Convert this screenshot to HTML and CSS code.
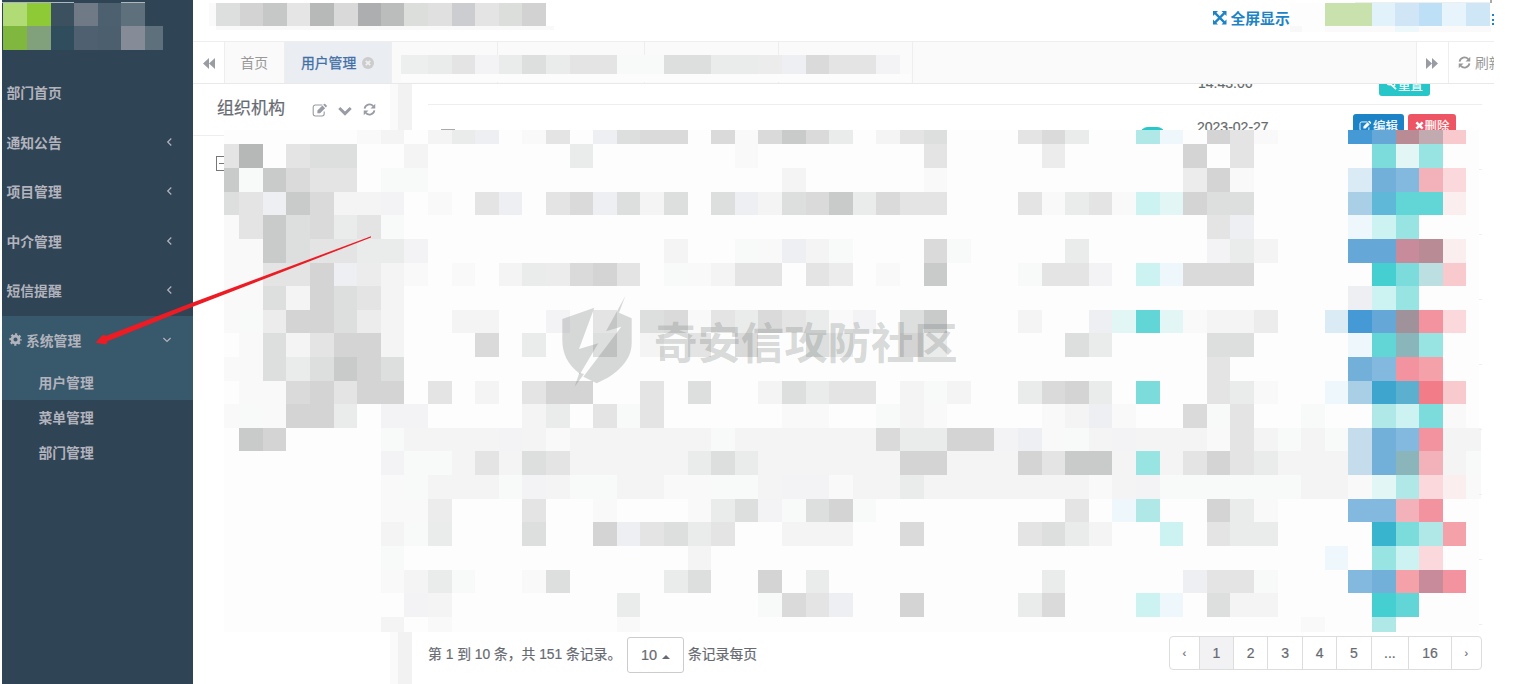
FILE: index.html
```html
<!DOCTYPE html>
<html lang="zh-CN">
<head>
<meta charset="utf-8">
<title>用户管理</title>
<link rel="stylesheet" href="styles.css">
</head>
<body>
<svg class="defs" width="0" height="0">
  <symbol id="left" viewBox="0 0 8 12"><path d="M6.3 2.5 2.7 6l3.6 3.5" fill="none" stroke="currentColor" stroke-width="1.2"/></symbol>
  <symbol id="down" viewBox="0 0 10 8"><path d="M1.4 2 5 5.5l3.6-3.5" fill="none" stroke="currentColor" stroke-width="1.2"/></symbol>
  <symbol id="refresh" viewBox="0 0 14 14"><path d="M1.7 6A5.3 5.3 0 0 1 11 3.4M12.3 8A5.3 5.3 0 0 1 3 10.6" fill="none" stroke="currentColor" stroke-width="1.9"/><path d="M13.2.8v5.1H8.1zM.8 13.2V8.1h5.1z" fill="currentColor"/></symbol>
  <symbol id="edit" viewBox="0 0 16 14"><path d="M10.3 2H3.4A2.2 2.2 0 0 0 1.2 4.2v6.6A2.2 2.2 0 0 0 3.4 13H10a2.2 2.2 0 0 0 2.2-2.2V8.6" fill="none" stroke="currentColor" stroke-width="1.1"/><path d="M5.4 10.2V7.5l5-5 2.7 2.7-5 5zM11.2 1.7l.8-.8q.6-.5 1.2 0l1.5 1.5q.5.6 0 1.2l-.8.8z" fill="currentColor"/></symbol>
</svg>
<div class="app">
  <nav class="sidebar">
    <ul class="menu">
      <li class="item">部门首页</li>
      <li class="item">通知公告<svg class="angle"><use href="#left"/></svg></li>
      <li class="item">项目管理<svg class="angle"><use href="#left"/></svg></li>
      <li class="item">中介管理<svg class="angle"><use href="#left"/></svg></li>
      <li class="item">短信提醒<svg class="angle"><use href="#left"/></svg></li>
      <li class="group">
        <div class="item open"><svg class="gear" viewBox="0 0 14 14"><circle cx="7" cy="7" r="5.5" fill="none" stroke="currentColor" stroke-width="2.4" stroke-dasharray="2.3 2.02" stroke-dashoffset="1.15"/><circle cx="7" cy="7" r="3.7" fill="none" stroke="currentColor" stroke-width="3"/></svg>系统管理<svg class="angle wide"><use href="#down"/></svg></div>
        <div class="sub open">用户管理</div>
        <div class="sub">菜单管理</div>
        <div class="sub">部门管理</div>
      </li>
    </ul>
  </nav>
  <main class="main">
    <header class="topbar">
      <a class="full"><svg class="i-full" viewBox="0 0 14 14"><path d="M2 2l10 10M12 2 2 12" stroke="currentColor" stroke-width="2.4"/><path d="M0 0h5.2L0 5.2zM14 0v5.2L8.8 0zM0 14V8.8L5.2 14zM14 14H8.8L14 8.8z" fill="currentColor"/></svg>全屏显示</a>
    </header>
    <div class="tabs">
      <div class="roll"><svg class="i-roll" viewBox="0 0 12 11"><path d="M6 0v11L0 5.5zM12 0v11L6 5.5z" fill="currentColor"/></svg></div>
      <div class="tab home">首页</div>
      <div class="tab active">用户管理<svg class="close" viewBox="0 0 12 12"><circle cx="6" cy="6" r="6" fill="#ccc"/><path d="M3.8 3.8l4.4 4.4M8.2 3.8 3.8 8.2" stroke="#eef0f2" stroke-width="1.7"/></svg></div>
      <div class="tab t1"></div><div class="tab t2"></div><div class="tab t3"></div><div class="tab t4"></div>
      <div class="fill"></div>
      <div class="roll right"><svg class="i-roll" viewBox="0 0 12 11"><path d="M0 0v11l6-5.5zM6 0v11l6-5.5z" fill="currentColor"/></svg></div>
      <div class="reload"><svg class="i-ref"><use href="#refresh"/></svg>刷新</div>
    </div>
    <div class="content">
      <aside class="tree">
        <div class="tree-head">组织机构
          <svg class="i-edit"><use href="#edit"/></svg>
          <svg class="i-down" viewBox="0 0 14 10"><path d="M1.3 2 7 7.6 12.7 2" fill="none" stroke="currentColor" stroke-width="2.9"/></svg>
          <svg class="i-ref"><use href="#refresh"/></svg>
        </div>
        <div class="node"></div>
      </aside>
      <div class="splitter"></div>
      <section class="list">
        <div class="row prev"><span class="time">14:43:06</span><span class="btn reset"><svg class="i-btn" viewBox="0 0 12 12"><circle cx="3.5" cy="4" r="2.2" fill="none" stroke="currentColor" stroke-width="1.8"/><path d="M5 5.5l6 5.5M8 8l2-2" stroke="currentColor" stroke-width="1.8"/></svg>重置</span></div>
        <div class="row next"><span class="check"></span><span class="toggle"></span><span class="time">2023-02-27</span><span class="btn modify"><svg class="i-btn wide"><use href="#edit"/></svg>编辑</span><span class="btn remove"><svg class="i-btn x" viewBox="0 0 10 10"><path d="M1.5 1.5l7 7M8.5 1.5l-7 7" stroke="currentColor" stroke-width="2.8"/></svg>删除</span></div>
        <footer class="foot">
          <span class="info">第 1 到 10 条，共 151 条记录。</span>
          <span class="size">10<i class="caret"></i></span>
          <span class="per">条记录每页</span>
          <div class="pages"><b class="p0">‹</b><b class="on">1</b><b>2</b><b>3</b><b>4</b><b>5</b><b class="p3">...</b><b class="p6">16</b><b class="p1">›</b></div>
        </footer>
      </section>
    </div>
  </main>
  <svg class="overlay" id="mosaic" viewBox="0 0 1524 684"></svg>
  <svg class="overlay" viewBox="0 0 1524 684">
    <g transform="translate(380 230) scale(.33333)" fill="#6e7373" fill-opacity=".27">
      <path d="M547 267 643 233 597 357 655 340 600 432C562 403 547 370 547 330Z"/>
      <path d="M584 470 598 428 612 432Z"/>
      <path d="M736 198 678 304 724 290 610 440 650 460C710 435 755 392 755 340V265L717 248Z"/>
    </g>
    <path d="M371 236.3 192 302.8 106.5 335.8 102.5 335 95.5 342.8 106.5 344.6 107 341.6 193.5 306.6 371 237.4Z" fill="#ed1c24"/>
  </svg>
  <div class="watermark">奇安信攻防社区</div>
</div>
<script src="mosaic.js"></script>
</body>
</html>
```

FILE: styles.css
```css
* { box-sizing: border-box; }
body { margin: 0; background: #fff; font-family: "Liberation Sans", "Noto Sans CJK SC", sans-serif; font-size: 13.8px; color: #676a6c; }
.defs { position: absolute; }
.app { position: relative; display: flex; width: 1524px; height: 684px; padding-left: 2px; overflow: hidden; }
.sidebar { width: 191px; flex: none; background: #2f4454; padding-top: 68.4px; color: #b3b3bd; font-weight: 600; }
.menu { list-style: none; margin: 0; padding: 0; }
.item { height: 49.5px; display: flex; align-items: center; padding: 0 20px 2px 4.5px; }
.item.open { padding-left: 7px; }
.open { background: #38586b; }
.angle { width: 8px; height: 12px; margin-left: auto; }
.angle.wide { width: 10px; height: 8px; margin-right: 1px; }
.gear { width: 13px; height: 13px; margin-right: 4px; }
.sub { height: 35px; line-height: 38px; padding-left: 36.5px; }
.main { width: 1301px; flex: none; display: flex; flex-direction: column; overflow: hidden; }
.topbar { height: 41px; flex: none; }
.full { display: flex; align-items: center; gap: 4px; margin-left: 1020px; height: 35.5px; font-size: 14.8px; font-weight: 600; color: #1c84c6; }
.i-full { width: 13.5px; height: 13.5px; }
.tabs { height: 43px; flex: none; display: flex; border-top: 1px solid #eee; border-bottom: 1px solid #e8e9e9; background: #fafafa; color: #999; overflow: hidden; }
.roll { width: 32px; flex: none; background: #fff; border-right: 1px solid #eee; display: flex; align-items: center; justify-content: center; color: #999ca3; padding-top: 2px; }
.roll.right { border-left: 1px solid #eee; width: 33px; padding-right: 2px; }
.i-roll { width: 12px; height: 11px; }
.tab { flex: none; display: flex; align-items: center; border-right: 1px solid #eee; padding-bottom: 1.5px; }
.home { width: 60px; padding-left: 15.5px; }
.active { width: 107px; padding-left: 16px; background: #eaedf1; color: #4270a8; -webkit-text-stroke: .3px #4270a8; }
.close { width: 12px; height: 12px; margin: 2px 0 0 6px; }
.t1 { width: 106px; } .t2 { width: 147px; } .t3 { width: 134px; } .t4 { width: 134px; }
.fill { flex: 1; }
.reload { width: 45px; flex: none; background: #fff; display: flex; align-items: center; padding: 0 0 1.5px 9px; gap: 4px; white-space: nowrap; }
.reload .i-ref { margin-top: 2px; }
.i-ref { width: 13px; height: 13px; flex: none; }
.content { flex: 1; display: flex; min-height: 0; }
.tree { width: 197px; flex: none; }
.tree-head { height: 52px; border-bottom: 1px solid #eee; display: flex; align-items: center; padding: 0 0 6px 24px; font-size: 17px; color: #676a72; -webkit-text-stroke: .2px #676a72; }
.tree-head svg { color: #999ca6; margin-top: 6px; }
.i-edit { width: 16px; height: 14px; margin-left: 27px; }
.tree-head .i-down { width: 14px; height: 10px; margin: 8px 11px 0 10px; }
.node { width: 15px; height: 15px; margin: 20px 0 0 23px; border: 1.5px solid #777; background: linear-gradient(#777, #777) center / 9px 1px no-repeat; }
.splitter { width: 21.5px; flex: none; background: linear-gradient(90deg, #fafafa 8px, #f2f2f2 8px); }
.list { flex: 1; padding: 0 12px 0 16.5px; display: flex; flex-direction: column; overflow: hidden; }
.row { display: flex; }
.prev { height: 21px; flex: none; border-bottom: 1px solid #eee; align-items: flex-start; }
.time { font-size: 14px; line-height: 16px; -webkit-text-stroke: .2px #676a6c; }
.prev .time { margin: -9px 0 0 770px; width: 54px; }
.btn { display: flex; align-items: center; justify-content: center; height: 22px; border-radius: 3px; color: #fff; font-size: 12.4px; gap: 1px; -webkit-text-stroke: .2px #fff; }
.i-btn { width: 11px; height: 11px; }
.i-btn.wide { width: 13px; height: 12px; }
.i-btn.x { width: 9px; height: 9px; }
.reset { width: 51px; background: #26c6c9; margin: -10.5px 0 0 127px; }
.next { height: 527px; align-items: flex-start; flex: none; }
.check { width: 14px; height: 14px; border: 1px solid #aaa; margin: 24px 0 0 12.5px; }
.toggle { width: 27px; height: 18px; border-radius: 9px; border: 1px solid #26c6c9; background: #26c6c9; margin: 22px 0 0 684.5px; }
.next .time { margin: 14px 0 0 31px; width: 156px; }
.modify { width: 51px; background: #1c84c6; margin-top: 8.5px; padding-top: 2px; }
.remove { width: 48px; background: #ed5565; margin: 8.5px 0 0 4px; padding-top: 2px; }
.foot { display: flex; align-items: flex-start; height: 48px; color: #676a72; -webkit-text-stroke: .2px #676a72; }
.info { width: 199px; margin-top: 12.6px; line-height: 20px; white-space: nowrap; }
.size { width: 57px; height: 36px; margin-top: 5px; border: 1px solid #ccc; border-radius: 3px; display: flex; align-items: center; justify-content: center; gap: 5px; font-size: 14.5px; }
.caret { border: 4px solid transparent; border-top: 0; border-bottom-color: #676a72; margin-top: 3px; }
.per { margin: 12.6px 0 0 4px; line-height: 20px; }
.pages { display: flex; margin: 3.5px 0 0 auto; height: 34.5px; border: 1px solid #ddd; border-radius: 4px; }
.pages b { width: 34.4px; display: flex; align-items: center; justify-content: center; border-left: 1px solid #ddd; font-weight: 400; font-size: 14px; }
.pages .p0 { width: 28.6px; border: 0; font-size: 11px; }
.pages .on { background: #f2f2f4; }
.pages .p3 { width: 37.6px; } .pages .p6 { width: 42.6px; } .pages .p1 { width: 30.2px; font-size: 11px; }
.overlay { position: absolute; left: 0; top: 0; width: 1524px; height: 684px; }
.watermark { position: absolute; left: 654px; top: 313px; line-height: 62px; font-size: 43.4px; font-weight: 700; color: rgba(110, 115, 115, .27); white-space: nowrap; }
```

FILE: mosaic.js
```javascript
// Pixelated areas: each row lists runs as <first column><one colour key per cell>.
const colors = {
  _: '#fdfdfd', a: '#f9f9f9', b: '#f4f4f4', c: '#ececec', d: '#e4e4e4', e: '#dadada', f: '#d4d4d4', g: '#c9cbcb', h: '#b6b8b7',
  i: '#eeeff2', j: '#eaeceb', k: '#dcdfdd', l: '#f8faf9', y: '#f3f3f6',
  T: '#45cfd0', U: '#62d6d6', V: '#7cdcdc', W: '#97e4e3', X: '#b0e8e8', Y: '#ccf2f1', Z: '#e2f6f6',
  B: '#4599d4', C: '#65a8d8', D: '#72b0da', E: '#84b9df', F: '#a8cfe6', G: '#c4dceb', H: '#dbebf5', I: '#eef8fc',
  p: '#f27c88', P: '#f3939f', Q: '#f4a1aa', R: '#f3b1ba', S: '#f8cace', t: '#fad8dc', u: '#fbeeee',
  m: '#b98c95', n: '#c88b9b', o: '#9f929a', q: '#8ab5bb', r: '#3ea6ce', s: '#5cb0cf', v: '#39b4ce', w: '#60b8d8', x: '#c1abb1', z: '#bce0e1'
};
const rows = [
  '6ab 9bji 13ad 16ikee 21eaegej 28bdk 34dej 39XI 42fda 48BCmxS',
  '0dh_dkk 8b 15j 22a 30d 35c 41f_d 49VZW',
  '0glgedd_ll 24b 30a 41cfa 48HDERt',
  '0kdigebby_a 11di 14deikbk 21kibkegjedd 34dajda 39YZfkk 48FwUUu',
  '0adgkejdl 42di 48IYW_',
  '0aagkddjjy 19b 22laibl 30el 36j 42yjb 48CCnmu',
  '0aaddficba 10a_bjcefd 19labdd_dc_a_g 34lddy 39YIeee 49TVzS',
  '0aakbfkdb 48iYW',
  '0alcffkcb 10bb 14y 16d 18keadjedjay_kg 34b 37iZUZabbc 47HBCoPt',
  '0_akbdffb 11e 13j 16k_b_d_e 25kj 29fj 36kj 42kk 48IUqW',
  '0aakjkgfk 42d 48DEPQ',
  '0_aaefdff_d_b_dff 18d_k 23bkjdd_blb 34jefj 39V 42dja 47IFrspS',
  '0alaffj_yy 13bj_dld 24aa 28lba 35abia 41eld 46l 49XYVa',
  '1gf 7lbbbbybab 16bbbbblbbbbbb 28ejjffyi 35albybbba 43d 44blblGDEPbb',
  '7yllbdbkd 15bbbbb 20jkj 23bbbbbb 29ffbbb 34fdgg 38bWbdfdj 45bbb 48GDqRbl',
  '7albb 11blyb 15llbb 19aallb 24yyabbj 30bbbbbbbaa 37abyll 42llllbb 48aZXtua',
  '7aac 13d 16a 20ajkylkfl 36d_IX 42fja 48EERP',
  '7blj 13k 16fidkjd 24bbb 29e 34dkjb 40Y 42djj 49vVXQ',
  '7l 20b 47I 49WYt',
  '7abjl 13ak 19jk 23f_j 35j 41iddl 48EDQnP',
  '8yb 17j 23ledi 29f 34je 39YI 42kbb 49TU',
  '7b_a 17a 46a 49X'
];

const svg = document.getElementById('mosaic');
const box = (x, y, w, h, fill) => {
  const r = document.createElementNS('http://www.w3.org/2000/svg', 'rect');
  const set = { x, y, width: w, height: h, fill, 'shape-rendering': 'crispEdges' };
  for (const k in set) r.setAttribute(k, set[k]);
  svg.appendChild(r);
};
const edge = (c) => Math.round(215.5 + 23.6 * c);
box(224, 130, 1255, 502, '#fdfdfd');
rows.forEach((row, n) => {
  const y = n ? Math.round(144.4 + 23.62 * (n - 1)) : 130;
  const end = Math.min(632, Math.round(144.4 + 23.62 * n));
  row.split(' ').forEach((run) => {
    const m = run.match(/^(\d+)(.*)$/);
    [...m[2]].forEach((key, k) => {
      const c = Number(m[1]) + k;
      const x = Math.max(224, edge(c));
      const right = Math.min(edge(c + 1), 1481);
      if (key !== '_') box(x, y, right - x, end - y, colors[key]);
    });
  });
});
for (let y = 169; y < 632; y += 65) box(1479, y, 3, 1, '#eee');

const strip = (x, y, h, list) => list.forEach(([w, fill]) => { if (fill) box(x, y, w, h, fill); x += w; });
// Logo
strip(2, 2, 1, [[72, '#aeb7bd'], [47, null], [24, '#aeb7bd']]);
strip(3, 3, 23, [[24, '#b1dc75'], [24, '#8eca36'], [23, '#3b5160'], [24, '#6f7a86'], [23, '#4d606f'], [24, '#5f707d']]);
strip(3, 26, 24, [[24, '#80b83f'], [24, '#81a07c'], [23, '#2f4d5c'], [24, '#4f6070'], [23, '#4b5f6e'], [24, '#868c97'], [18, '#5f707d']]);
// Page heading
strip(209, 3, 23, [[7, '#fafafa'], [24, '#dddfde'], [23, '#d3d3d3'], [24, '#c6c8c7'], [23, '#e5e5e5'], [24, '#b7b9b8'], [24, '#d9d9d9'], [23, '#adaeb0'], [23, '#bbbdbc'], [24, '#dcdedc'], [24, '#e0e0e0'], [23, '#cccdd0'], [24, '#e4e4e4'], [23, '#dcdedc'], [24, '#d2d2d2']]);
strip(216, 26, 4, [[338, '#f9f9f9']]);
// Account links
strip(1290, 3, 23, [[35, '#fdfdfd'], [47, '#c9e1ad'], [23, '#e2f2fa'], [24, '#d0e6f7'], [23, '#bde0f6'], [24, '#e8f4fb'], [24, '#cfe6f7']]);
strip(1290, 26, 6, [[12, '#f8f8f8'], [23, '#fdfdfd'], [70, '#fafafa'], [24, '#edf8fb'], [72, '#fafafa']]);
strip(1355, 2, 1, [[136, '#eee']]);
strip(1490, 0, 3, [[2, '#aaa']]);
[14, 19, 23].forEach((y) => box(1492, y, 2, 2, '#1c84c6'));
// Tab titles
strip(401, 55, 19, [[27, '#edefee'], ...[...'jdyjkjddllkkjjcieddy'].map((k, n) => [edge(10 + n) - edge(9 + n), colors[k]])]);
box(401, 74, 510, 8, '#fcfcfc');
```
